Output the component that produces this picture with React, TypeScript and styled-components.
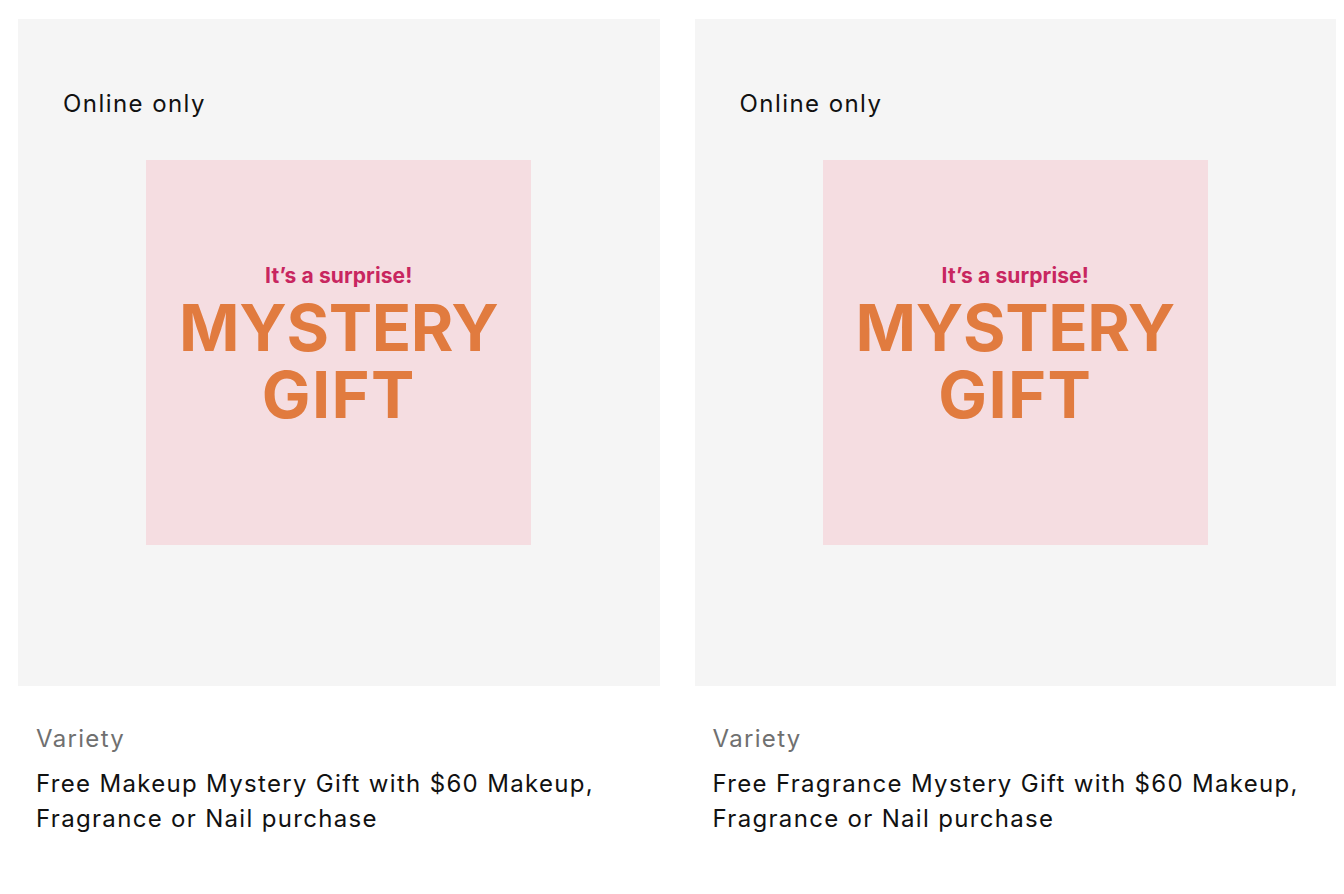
import React from "react";
import styled, { createGlobalStyle } from "styled-components";

const Global = createGlobalStyle`
  html, body { margin: 0; padding: 0; background: #ffffff; }
  body { font-family: Inter, "Noto Sans", "Liberation Sans", sans-serif; }
  * { box-sizing: border-box; }
`;

const Grid = styled.div`
  display: grid;
  grid-template-columns: 1fr 1fr;
  column-gap: 35px;
  padding: 19px 8px 0 18px;
`;

const Card = styled.article`
  display: flex;
  flex-direction: column;
`;

const ImageArea = styled.div`
  position: relative;
  height: 667px;
  background: #f5f5f5;
  display: flex;
  align-items: center;
  justify-content: center;
`;

const Badge = styled.span`
  position: absolute;
  left: 45px;
  top: 71px;
  font-size: 24px;
  line-height: 28px;
  letter-spacing: 0.06em;
  color: #111111;
`;

const Promo = styled.div`
  width: 385px;
  height: 385px;
  background: #f5dde1;
  display: flex;
  flex-direction: column;
  align-items: center;
  justify-content: center;
  padding-bottom: 14px;
`;

const Kicker = styled.div`
  font-family: Inter, "Liberation Sans", sans-serif;
  font-weight: 700;
  font-size: 21px;
  line-height: 24px;
  color: #c8265f;
  letter-spacing: 0.005em;
  margin-bottom: 6px;
`;

const HeadlineLine = styled.div<{ $wide?: boolean }>`
  font-family: Inter, "Liberation Sans", sans-serif;
  font-weight: 700;
  font-size: 65px;
  line-height: 67px;
  height: 67px;
  color: #e17b3f;
  text-align: center;
  letter-spacing: ${(p) => (p.$wide ? "0.02em" : "-0.005em")};
`;

const Info = styled.div`
  padding: 36px 18px 0 18px;
`;

const Brand = styled.div`
  font-size: 24px;
  line-height: 34px;
  letter-spacing: 0.055em;
  color: #707070;
`;

const Title = styled.div`
  margin-top: 10px;
  font-size: 24px;
  line-height: 35px;
  letter-spacing: 0.055em;
  color: #111111;
`;

const products = [
  { brand: "Variety", title: "Free Makeup Mystery Gift with $60 Makeup, Fragrance or Nail purchase" },
  { brand: "Variety", title: "Free Fragrance Mystery Gift with $60 Makeup, Fragrance or Nail purchase" },
];

export default function App() {
  return (
    <>
      <Global />
      <Grid>
        {products.map((p, i) => (
          <Card key={i}>
            <ImageArea>
              <Badge>Online only</Badge>
              <Promo>
                <Kicker>It’s a surprise!</Kicker>
                <HeadlineLine>MYSTERY</HeadlineLine>
                <HeadlineLine $wide>GIFT</HeadlineLine>
              </Promo>
            </ImageArea>
            <Info>
              <Brand>{p.brand}</Brand>
              <Title>{p.title}</Title>
            </Info>
          </Card>
        ))}
      </Grid>
    </>
  );
}
